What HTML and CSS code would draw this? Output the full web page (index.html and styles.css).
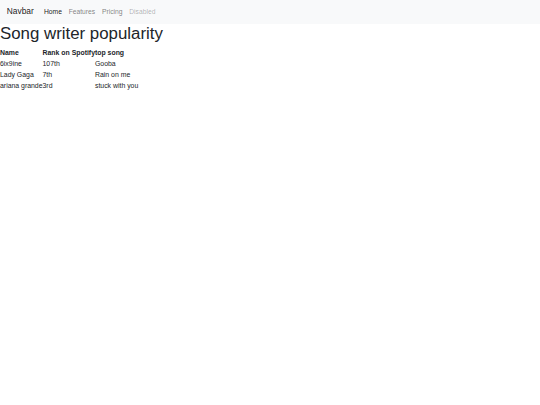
FILE: index.html
```html
<!DOCTYPE html>
<html>
<head>
<meta charset="utf-8">
<link rel="stylesheet" href="styles.css">
</head>
<body>
<nav class="navbar">
  <span class="brand">Navbar</span>
  <ul class="nav">
    <li class="link active">Home</li>
    <li class="link">Features</li>
    <li class="link">Pricing</li>
    <li class="link disabled">Disabled</li>
  </ul>
</nav>
<h1 class="title">Song writer popularity</h1>
<table class="songs">
  <thead>
    <tr><th>Name</th><th>Rank on Spotify</th><th>top song</th></tr>
  </thead>
  <tbody>
    <tr><td>6ix9ine</td><td>107th</td><td>Gooba</td></tr>
    <tr><td>Lady Gaga</td><td>7th</td><td>Rain on me</td></tr>
    <tr><td>ariana grande</td><td>3rd</td><td>stuck with you</td></tr>
  </tbody>
</table>
</body>
</html>
```
FILE: styles.css
```css
html, body {
  margin: 0;
  padding: 0;
  background: #fff;
}
body {
  font-family: "Liberation Sans", Arial, sans-serif;
  font-size: 6.74px;
  line-height: 1.5;
  color: #212529;
}
.navbar {
  display: flex;
  align-items: center;
  background: #f8f9fa;
  padding: 3.37px 6.74px;
}
.brand {
  font-size: 8.42px;
  line-height: 12.6px;
  padding: 2.1px 0;
  margin-right: 6.74px;
  color: rgba(0, 0, 0, 0.9);
}
.nav {
  display: flex;
  list-style: none;
  margin: 0;
  padding: 0;
}
.link {
  padding: 3.37px 3.37px;
  line-height: 10.1px;
  color: rgba(0, 0, 0, 0.5);
}
.link.active {
  color: rgba(0, 0, 0, 0.9);
}
.link.disabled {
  color: rgba(0, 0, 0, 0.3);
}
.title {
  font-size: 16.85px;
  font-weight: 500;
  line-height: 20.2px;
  margin: 0 0 3.37px;
}
.songs {
  border-collapse: collapse;
  border-spacing: 0;
  font-size: 6.9px;
}
.songs th, .songs td {
  padding: 0;
  text-align: left;
  line-height: 11px;
  vertical-align: top;
}
.songs th {
  font-weight: bold;
}
```
